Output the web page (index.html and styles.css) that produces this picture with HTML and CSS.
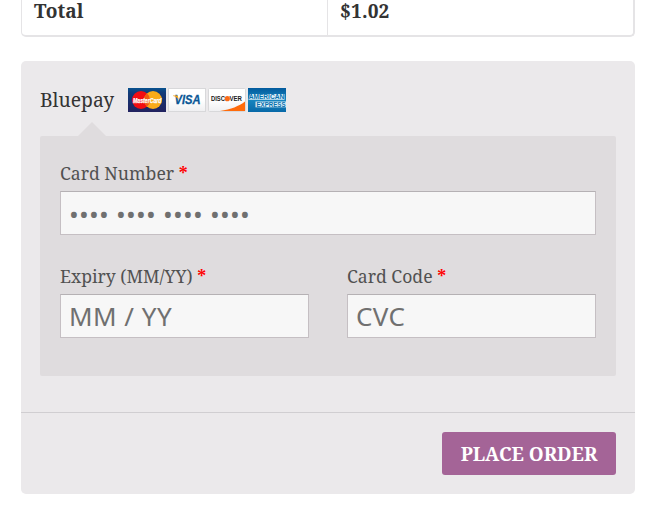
FILE: index.html
```html
<!DOCTYPE html>
<html lang="en">
<head>
<meta charset="utf-8">
<title>Checkout</title>
<link rel="stylesheet" href="styles.css">
</head>
<body>
<main class="checkout">
  <div class="totals">
    <div class="totals-label">Total</div>
    <div class="totals-value">$1.02</div>
  </div>
  <form class="payment">
    <div class="methods">
      <div class="method">
        <span class="method-name">Bluepay</span>
        <span class="cards">
          <svg width="38" height="24" viewBox="0 0 38 24" role="img" aria-label="MasterCard">
            <defs><linearGradient id="mc" x2="0" y2="1"><stop offset="0" stop-color="#08528f"/><stop offset=".2" stop-color="#123b78"/><stop offset="1" stop-color="#22225f"/></linearGradient></defs>
            <rect width="38" height="24" fill="url(#mc)"/>
            <circle cx="13" cy="12" r="9" fill="#f20d12"/>
            <circle cx="25" cy="12" r="9" fill="#fbab18"/>
            <path d="M19 5.3a9 9 0 0 1 0 13.4a9 9 0 0 1 0-13.4z" fill="#f05a12"/>
            <text class="mc-text" x="5" y="14.500" textLength="28.500" lengthAdjust="spacingAndGlyphs">MasterCard</text>
          </svg>
          <svg width="38" height="24" viewBox="0 0 38 24" role="img" aria-label="Visa">
            <defs><linearGradient id="pale" x2="0" y2="1"><stop offset="0" stop-color="#fff"/><stop offset=".5" stop-color="#fff"/><stop offset="1" stop-color="#efeff1"/></linearGradient></defs>
            <rect x=".5" y=".5" width="37" height="23" fill="url(#pale)" stroke="#d8d8da"/>
            <text class="visa-text" x="6.500" y="16.300" textLength="26" lengthAdjust="spacingAndGlyphs">VISA</text>
            <path d="M5 7.500h4.800l1 4.500c-1-2-3-3.400-5.800-4z" fill="#f5a81c"/>
          </svg>
          <svg width="38" height="24" viewBox="0 0 38 24" role="img" aria-label="Discover">
            <rect x=".5" y=".5" width="37" height="23" rx="1" fill="url(#pale)" stroke="#d8d8da"/>
            <path d="M12 23C23 21.500 31 18 37 13.500V23z" fill="#ff6b0b"/>
            <text class="disc-text" x="3" y="13.300" textLength="14" lengthAdjust="spacingAndGlyphs">DISC</text>
            <circle cx="19.300" cy="10.700" r="2.600" fill="#fb6b18"/>
            <text class="disc-text" x="21.500" y="13.300" textLength="12.500" lengthAdjust="spacingAndGlyphs">VER</text>
          </svg>
          <svg width="38" height="24" viewBox="0 0 38 24" role="img" aria-label="American Express">
            <defs><linearGradient id="ax" x2="0" y2="1"><stop offset="0" stop-color="#035b9d"/><stop offset=".5" stop-color="#1685bf"/><stop offset="1" stop-color="#0869a8"/></linearGradient></defs>
            <rect width="38" height="24" fill="url(#ax)"/>
            <path d="M2 6h34.500v5.800H.5z" fill="#d9edf7"/>
            <path d="M7.500 13.500H38v5.800H7.500z" fill="#d9edf7"/>
            <text class="amex-text" x=".7" y="11.400" textLength="35.500" lengthAdjust="spacingAndGlyphs">AMERICAN</text>
            <text class="amex-text" x="8.500" y="18.900" textLength="29" lengthAdjust="spacingAndGlyphs">EXPRESS</text>
          </svg>
        </span>
      </div>
      <div class="fields">
        <div class="field field-wide">
          <label for="num">Card Number <b class="required">*</b></label>
          <input id="num" class="number" type="text" placeholder="•••• •••• •••• ••••">
        </div>
        <div class="field">
          <label for="exp">Expiry (MM/YY) <b class="required">*</b></label>
          <input id="exp" class="expiry" type="text" placeholder="MM / YY">
        </div>
        <div class="field">
          <label for="cvc">Card Code <b class="required">*</b></label>
          <input id="cvc" type="text" placeholder="CVC">
        </div>
      </div>
    </div>
    <div class="actions"><button type="button">PLACE ORDER</button></div>
  </form>
</main>
</body>
</html>
```
FILE: styles.css
```css
* { box-sizing: border-box; }
body {
  margin: 0;
  background: #fff;
  color: #333;
  font-family: "Noto Serif", "Droid Serif", "DejaVu Serif Condensed", "DejaVu Serif", serif;
}
.checkout { width: 614px; margin-left: 21px; }
.totals {
  display: grid;
  grid-template-columns: 305px 1fr;
  height: 37px;
  border: 1px solid #e5e4e6;
  border-top: 0;
  border-right-width: 2px;
  border-bottom-width: 2px;
  border-radius: 0 0 5px 5px;
  font-size: 19.1px;
  font-weight: 700;
  line-height: 22px;
}
.totals-label { padding-left: 12px; }
.totals-value { padding-left: 12px; border-left: 1px solid #e5e4e6; letter-spacing: .15px; }
.payment {
  height: 433px;
  margin-top: 24px;
  border-radius: 5px;
  background: #ebe9eb;
}
.methods { height: 352px; padding: 27px 19px 0; border-bottom: 1px solid #d0ced1; }
.method { display: flex; height: 24px; align-items: center; font-size: 19.25px; }
.method-name { width: 88px; line-height: 24px; white-space: nowrap; }
.cards { display: flex; gap: 2px; }
.cards svg { display: block; }
.cards text { font-family: "Liberation Sans", Arial, sans-serif; font-weight: 700; }
.mc-text { font-size: 7px; font-style: italic; fill: #fff; stroke: #fff; stroke-width: .25px; }
.visa-text { font-size: 12px; font-style: italic; fill: #0b5796; stroke: #0b5796; stroke-width: .3px; }
.disc-text { font-size: 7.3px; fill: #222; }
.amex-text { font-size: 6.4px; fill: #0870ae; }
.fields {
  position: relative;
  display: grid;
  grid-template-columns: 249px 249px;
  column-gap: 38px;
  height: 240px;
  margin-top: 24px;
  padding: 25px 20px 0;
  grid-template-rows: 103px 103px;
  border-radius: 2px;
  background: #dfdcde;
}
.fields::before {
  content: "";
  position: absolute;
  top: -14px;
  left: 38px;
  border: 14px solid transparent;
  border-top: 0;
  border-bottom-color: #dfdcde;
}
.field-wide { grid-column: 1 / -1; }
label {
  display: block;
  height: 30px;
  color: #515151;
  font-size: 17.6px;
  line-height: 24px;
  white-space: nowrap;
}
.required { color: red; }
input {
  display: block;
  width: 100%;
  height: 44px;
  padding: 0 8px;
  border: 1px solid #c5bfc3;
  border-top-color: #b5b1b4;
  border-radius: 0;
  background: #f7f7f7;
  font-family: "Noto Sans", "Open Sans", sans-serif;
  font-size: 26px;
  letter-spacing: .35px;
}
.number { padding-top: 2px; letter-spacing: .22px; }
.expiry { letter-spacing: .48px; }
input::placeholder { color: #707070; opacity: 1; }
.actions { display: flex; justify-content: flex-end; padding: 19px 19px 0; }
button {
  width: 174px;
  height: 43px;
  padding: 0;
  border: 0;
  border-radius: 3px;
  background: #a46497;
  color: #fff;
  font-family: inherit;
  font-size: 18.9px;
  font-weight: 700;
  white-space: nowrap;
}
```
